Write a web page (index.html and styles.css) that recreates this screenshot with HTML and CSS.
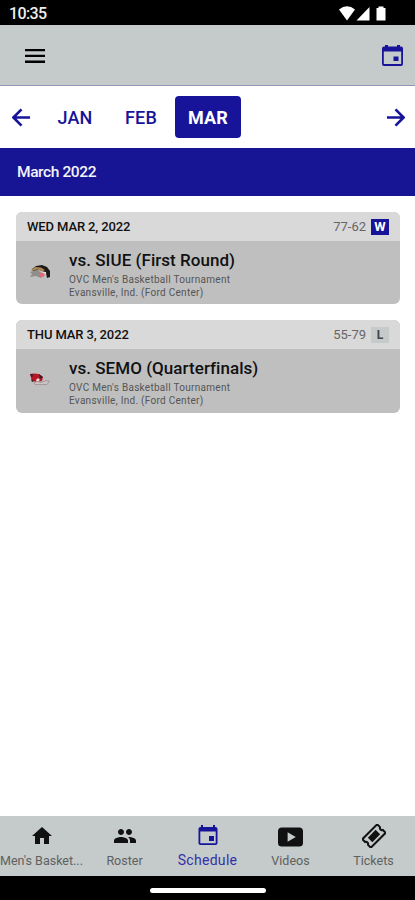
FILE: index.html
```html
<!DOCTYPE html>
<html lang="en">
<head>
    <meta charset="UTF-8">
    <meta name="viewport" content="width=device-width, initial-scale=1.0">
    <title>Schedule</title>
    <link rel="stylesheet" href="styles.css">
</head>
<body>
    <div class="status-bar">
        <span class="time">10:35</span>
        <svg class="status-icons" viewBox="0 0 48 15">
            <path d="M0 3.500Q8 -3 16 3.500L8 14.500Z"/>
            <path d="M17.500 14.500L30.500 1V14.500Z"/>
            <path d="M39.500 0.500h5v1.500h2v12.500h-9V2h2z"/>
        </svg>
    </div>

    <header class="app-header">
        <svg class="menu-icon" viewBox="0 0 20 14">
            <path d="M0 0h20v2.300H0zM0 5.800h20v2.300H0zM0 11.600h20v2.300H0z"/>
        </svg>
        <svg class="calendar-icon" viewBox="0 0 21 21">
            <path d="M3 0h3v1.500h9V0h3v1.500h1a2 2 0 0 1 2 2V19a2 2 0 0 1-2 2H2a2 2 0 0 1-2-2V3.500a2 2 0 0 1 2-2h1zM1.800 6.500V19h17.400V6.500zM11.500 11.500h5v4.500h-5z" fill-rule="evenodd"/>
        </svg>
    </header>

    <nav class="months">
        <svg class="arrow" viewBox="0 0 20 20">
            <path d="M19 10H2M10 1.500L1.500 10L10 18.500"/>
        </svg>
        <div class="month-list">
            <a class="month">JAN</a>
            <a class="month">FEB</a>
            <a class="month active">MAR</a>
        </div>
        <svg class="arrow" viewBox="0 0 20 20">
            <path d="M1 10H18M10 1.500L18.500 10L10 18.500"/>
        </svg>
    </nav>

    <h2 class="month-title">March 2022</h2>

    <main class="games">
        <article class="game">
            <div class="game-head">
                <span class="date">WED MAR 2, 2022</span>
                <span class="score">77-62</span>
                <span class="result win">W</span>
            </div>
            <div class="game-body">
                <svg class="logo" viewBox="0 0 22 16">
                    <path d="M3 5L7 2L13 1L18 3L21 7V13L18 14L17 9L11 6L4 7Z" fill="#1d1a18"/>
                    <path d="M2 6L6 3L12 3.500L16 6L13 7.500L8 5.500L3 7Z" fill="#a98657"/>
                    <path d="M1 8L8 6L13 9L12 14L7 12L1 13L3 10Z" fill="#8f8e8a"/>
                    <path d="M11 9L16 8.500L15 12.500L12 13.500L10 11Z" fill="#e36b78"/>
                    <path d="M13 7.500L17 8L17 10L14 9Z" fill="#eadfd3"/>
                </svg>
                <div class="details">
                    <h3>vs. SIUE (First Round)</h3>
                    <p>OVC Men's Basketball Tournament</p>
                    <p>Evansville, Ind. (Ford Center)</p>
                </div>
            </div>
        </article>

        <article class="game">
            <div class="game-head">
                <span class="date">THU MAR 3, 2022</span>
                <span class="score">55-79</span>
                <span class="result loss">L</span>
            </div>
            <div class="game-body">
                <svg class="logo" viewBox="0 0 22 16">
                    <path d="M1 2L5 1.500L10 2L14 5L13 9L8 10L3 9Z" fill="#b91625"/>
                    <path d="M1 2L4 2L3 6ZM10 2L14 5L11 7ZM2 7L5 9L3 10Z" fill="#332326"/>
                    <path d="M7 8L9 6L11 8L8 10Z" fill="#f1dedb"/>
                    <path d="M5 10.500Q9 8.500 12 10.500Q16 8 20.500 9L18 12.500L6 12.500Z" fill="#cbc5c5" stroke="#9d8587" stroke-width=".7"/>
                </svg>
                <div class="details">
                    <h3>vs. SEMO (Quarterfinals)</h3>
                    <p>OVC Men's Basketball Tournament</p>
                    <p>Evansville, Ind. (Ford Center)</p>
                </div>
            </div>
        </article>
    </main>

    <nav class="tab-bar">
        <a class="tab">
            <svg viewBox="0 0 24 24"><path d="M10 20v-6h4v6h5v-8h3L12 3 2 12h3v8z"/></svg>
            <span>Men's Basket...</span>
        </a>
        <a class="tab">
            <svg viewBox="0 0 24 24"><path d="M16 11c1.660 0 2.990-1.340 2.990-3S17.660 5 16 5s-3 1.340-3 3 1.340 3 3 3zm-8 0c1.660 0 2.990-1.340 2.990-3S9.660 5 8 5 5 6.340 5 8s1.340 3 3 3zm0 2c-2.330 0-7 1.170-7 3.500V19h14v-2.500C15 14.170 10.330 13 8 13zm8 0c-.29 0-.62.02-.97.050 1.160.84 1.970 1.970 1.970 3.450V19h6v-2.500c0-2.330-4.670-3.500-7-3.500z"/></svg>
            <span>Roster</span>
        </a>
        <a class="tab selected">
            <svg viewBox="0 0 24 24"><path d="M18 12h-5v5h5v-5zM17 1v2H7V1H5v2H4.500c-1.110 0-2 .9-2 2v14c0 1.100.89 2 2 2h15c1.100 0 2-.9 2-2V5c0-1.100-.9-2-2-2H19V1h-2zm2.700 18.200H4.300V7.500h15.400v11.700z"/></svg>
            <span>Schedule</span>
        </a>
        <a class="tab">
            <svg class="video-icon" viewBox="0 0 26 20"><path d="M4 0h18a4 4 0 0 1 4 4v12a4 4 0 0 1-4 4H4a4 4 0 0 1-4-4V4a4 4 0 0 1 4-4zM10 5v10l8.500-5z" fill-rule="evenodd"/></svg>
            <span>Videos</span>
        </a>
        <a class="tab">
            <svg class="ticket-icon" viewBox="0 0 24 24">
                <g transform="rotate(-45 12 12)">
                    <path class="ticket-edge" d="M1.500 6h21v4a2.200 2.200 0 0 0 0 4v4h-21v-4a2.200 2.200 0 0 0 0-4z"/>
                    <path d="M6.500 8.800h11v6.400h-11z"/>
                </g>
            </svg>
            <span>Tickets</span>
        </a>
    </nav>

    <div class="gesture-bar"><span></span></div>
</body>
</html>
```

FILE: styles.css
```css
* {
    box-sizing: border-box;
    margin: 0;
    padding: 0;
}

body {
    font-family: Roboto, Arial, sans-serif;
    background-color: #fff;
    color: #111;
    height: 900px;
    display: flex;
    flex-direction: column;
    overflow: hidden;
}

svg {
    display: block;
    flex-shrink: 0;
}

.status-bar {
    height: 25px;
    background-color: #000;
    color: #eee;
    display: flex;
    justify-content: space-between;
    align-items: center;
    padding: 2px 28px 0 9px;
}

.time {
    font-size: 16px;
    font-weight: 500;
    letter-spacing: -0.6px;
}

.status-icons {
    width: 48px;
    height: 15px;
    fill: #fff;
}

.app-header {
    height: 61px;
    background-color: #c5caca;
    border-bottom: 1px solid #9694b8;
    display: flex;
    justify-content: space-between;
    align-items: center;
    padding: 1px 12px 0 25px;
}

.menu-icon {
    width: 20px;
    height: 14px;
}

.calendar-icon {
    width: 21px;
    height: 21px;
    fill: #17149a;
}

.months {
    height: 62px;
    display: flex;
    align-items: center;
    padding: 0 10px 0 12px;
    color: #17149a;
}

.arrow {
    width: 19px;
    height: 19px;
    fill: none;
    stroke: #17149a;
    stroke-width: 2.8;
}

.month-list {
    flex: 1;
    display: flex;
    margin-left: 11px;
}

.month {
    width: 66px;
    height: 42px;
    line-height: 43px;
    text-align: center;
    font-size: 18px;
    font-weight: 500;
    letter-spacing: 0.2px;
    border-radius: 4px;
}

.month.active {
    background-color: #17149a;
    color: #fff;
    font-weight: 700;
    margin-left: 1px;
}

.month-title {
    height: 48px;
    line-height: 49px;
    background-color: #171594;
    color: #f4f4fa;
    font-size: 15.5px;
    font-weight: 500;
    letter-spacing: -0.4px;
    padding-left: 17px;
}

.games {
    flex: 1;
    display: flex;
    flex-direction: column;
    gap: 16px;
    padding: 16px 15px 0 16px;
}

.game {
    height: 92.4px;
    border-radius: 6px;
    background-color: #bfbfbf;
    overflow: hidden;
}

.game-head {
    height: 29px;
    background-color: #d9d9d9;
    display: flex;
    align-items: center;
    padding: 0 11px;
}

.date {
    flex: 1;
    font-size: 13px;
    font-weight: 500;
    letter-spacing: -0.12px;
}

.score {
    font-size: 13px;
    color: #666;
}

.result {
    width: 18px;
    height: 16px;
    line-height: 16px;
    margin-left: 5px;
    text-align: center;
    font-size: 13px;
    font-weight: 700;
}

.win {
    background-color: #17149a;
    color: #fff;
}

.loss {
    background-color: #c5caca;
    color: #444;
    font-size: 12px;
}

.game-body {
    display: flex;
    padding: 8.500px 0 0 13px;
}

.logo {
    width: 22px;
    height: 16px;
    margin-top: 14px;
}

.details {
    margin-left: 18px;
}

.details h3 {
    font-size: 17px;
    line-height: 21px;
    font-weight: 500;
    letter-spacing: 0.04px;
    margin-bottom: 2px;
}

.details p {
    font-size: 10px;
    line-height: 13px;
    letter-spacing: 0.28px;
    color: #555;
}

.tab-bar {
    height: 60px;
    background-color: #c5caca;
    display: flex;
}

.tab {
    width: 83px;
    height: 60px;
    display: flex;
    flex-direction: column;
    align-items: center;
    justify-content: space-between;
    padding: 8px 0 8px;
    font-size: 12.5px;
    line-height: 15px;
    color: #5d6161;
    white-space: nowrap;
}

.tab svg {
    width: 24px;
    height: 24px;
    fill: #111;
}

.tab .video-icon {
    width: 25px;
    height: 20px;
    margin-top: 3px;
}

.tab .ticket-edge {
    fill: none;
    stroke: #111;
    stroke-width: 2;
}

.tab.selected {
    color: #3430a8;
    font-size: 14px;
    letter-spacing: 0.3px;
}

.tab.selected svg {
    fill: #17149a;
}

.gesture-bar {
    height: 24px;
    background-color: #000;
    display: flex;
    justify-content: center;
    align-items: center;
    padding-top: 4px;
}

.gesture-bar span {
    width: 116px;
    height: 5px;
    border-radius: 3px;
    background-color: #fff;
}
```
